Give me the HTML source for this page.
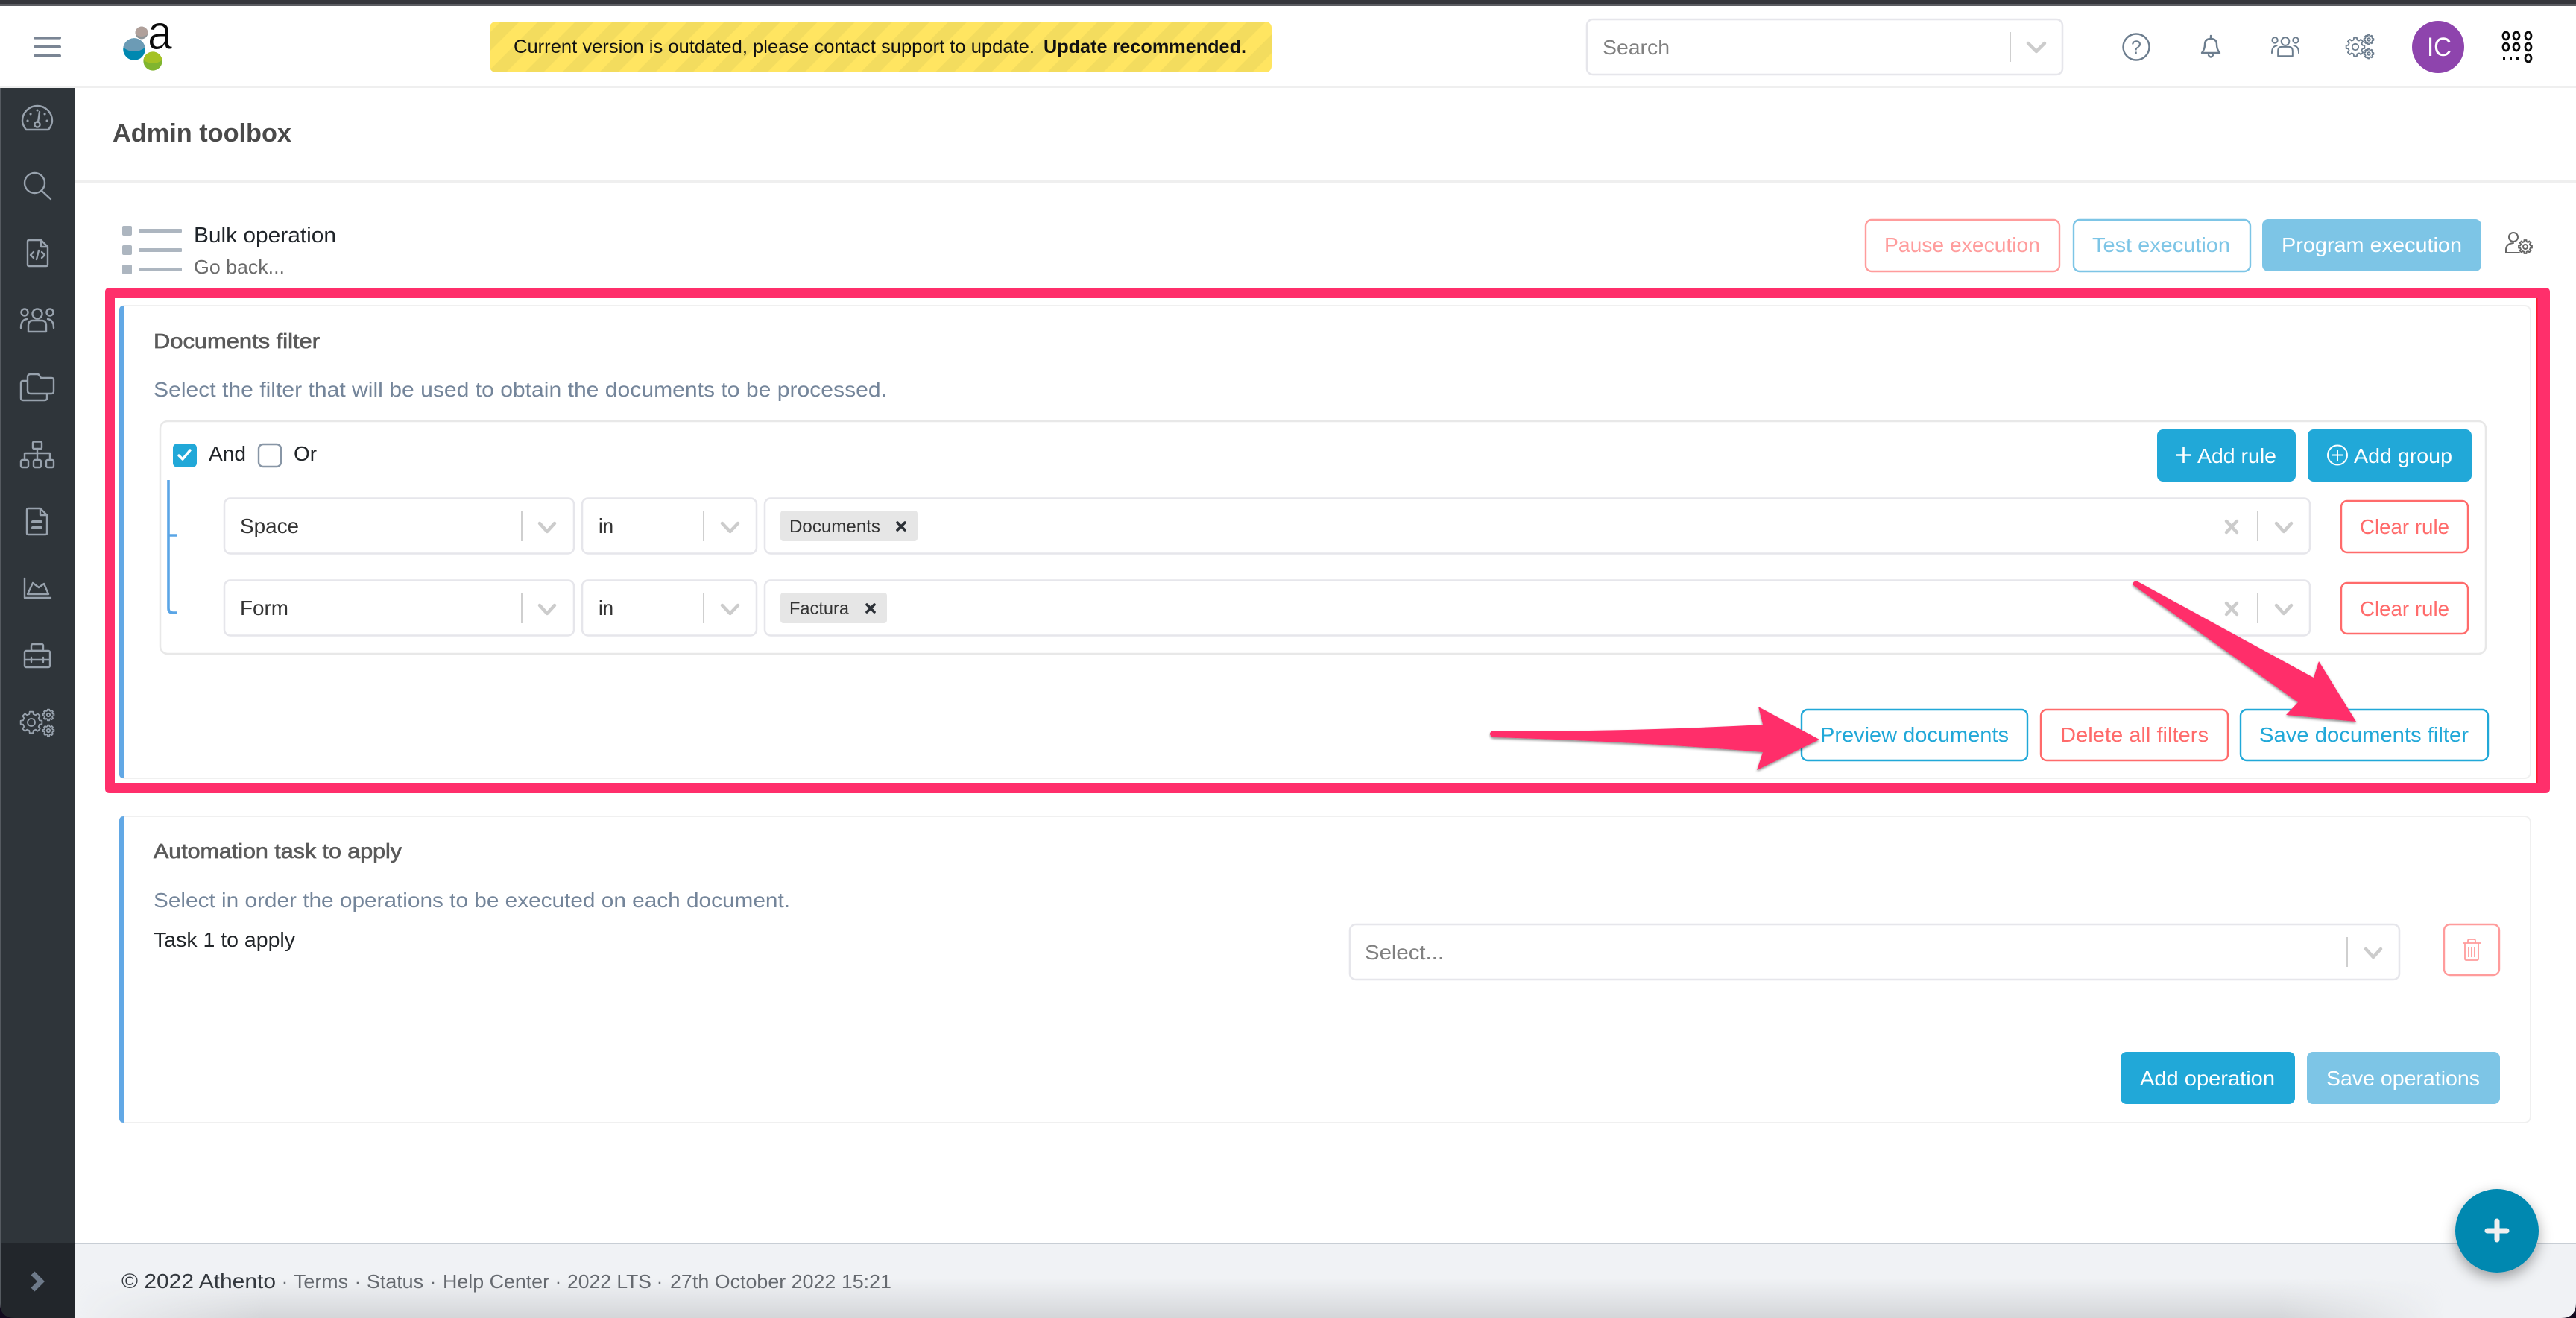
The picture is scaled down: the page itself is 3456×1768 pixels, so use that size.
<!DOCTYPE html>
<html lang="en">
<head>
<meta charset="utf-8">
<title>Admin toolbox</title>
<style>
html,body{margin:0;padding:0;background:#fff;width:3456px;height:1768px;overflow:hidden}
svg{display:block}
text{font-family:"Liberation Sans",Arial,sans-serif;white-space:pre}
.ic{fill:none;stroke:#98a2ad;stroke-width:2.4;stroke-linecap:round;stroke-linejoin:round}
.hi{fill:none;stroke:#6c7d8e;stroke-width:2.4;stroke-linecap:round;stroke-linejoin:round}
.sel{fill:#fff;stroke:#e6e6eb;stroke-width:2.5}
.sep{stroke:#cfcfcf;stroke-width:2}
.chev{fill:none;stroke:#cccccc;stroke-width:4.5;stroke-linecap:round;stroke-linejoin:round}
.med{stroke-width:.7}
</style>
</head>
<body>
<svg xmlns="http://www.w3.org/2000/svg" width="3456" height="1768" viewBox="0 0 3456 1768">
<defs>
<pattern id="st" width="35.4" height="35.4" patternUnits="userSpaceOnUse" patternTransform="rotate(45)">
<rect width="35.4" height="35.4" fill="#ffe561"/><rect width="17.7" height="35.4" fill="#f3dc5e"/>
</pattern>
<path id="gear" vector-effect="non-scaling-stroke" d="M75.7 -18.9 L98.8 -15.6 L98.8 15.6 L75.7 18.9 L66.9 40.2 L80.9 58.8 L58.8 80.9 L40.2 66.9 L18.9 75.7 L15.6 98.8 L-15.6 98.8 L-18.9 75.7 L-40.2 66.9 L-58.8 80.9 L-80.9 58.8 L-66.9 40.2 L-75.7 18.9 L-98.8 15.6 L-98.8 -15.6 L-75.7 -18.9 L-66.9 -40.2 L-80.9 -58.8 L-58.8 -80.9 L-40.2 -66.9 L-18.9 -75.7 L-15.6 -98.8 L15.6 -98.8 L18.9 -75.7 L40.2 -66.9 L58.8 -80.9 L80.9 -58.8 L66.9 -40.2 Z"/>
<clipPath id="cb"><circle cx="180" cy="66" r="14.8"/></clipPath>
<clipPath id="cg"><circle cx="205" cy="82" r="12.6"/></clipPath>
<clipPath id="cy"><circle cx="190" cy="44" r="8.4"/></clipPath>
<linearGradient id="fs" x1="0" y1="0" x2="0" y2="1"><stop offset="0" stop-color="#d6d8db" stop-opacity="0"/><stop offset="1" stop-color="#d3d5d8"/></linearGradient>
<linearGradient id="fm" x1="0" y1="0" x2="1" y2="0"><stop offset="0" stop-color="#fff" stop-opacity="0"/><stop offset=".08" stop-color="#fff"/><stop offset=".93" stop-color="#fff"/><stop offset="1" stop-color="#fff" stop-opacity="0"/></linearGradient>
<mask id="fmk"><rect x="100" y="1700" width="3180" height="68" fill="url(#fm)"/></mask>
<filter id="ash" x="-10%" y="-10%" width="120%" height="130%"><feDropShadow dx="0" dy="2" stdDeviation="1.5" flood-color="#000" flood-opacity=".45"/></filter>
<filter id="fab" x="-40%" y="-40%" width="180%" height="180%"><feDropShadow dx="0" dy="7" stdDeviation="9" flood-color="#000" flood-opacity=".35"/></filter>
</defs>

<rect width="3456" height="1768" fill="#fff"/>

<!-- window top bar -->
<rect width="3456" height="6" fill="#36373c"/>
<rect y="6" width="3456" height="2" fill="#5c5d62"/>

<!-- header -->
<rect y="116" width="3456" height="2" fill="#efefef"/>
<g fill="#7a8594">
<rect x="45" y="49" width="37" height="3.6" rx="1.8"/>
<rect x="45" y="61" width="37" height="3.6" rx="1.8"/>
<rect x="45" y="73" width="37" height="3.6" rx="1.8"/>
</g>
<!-- logo -->
<g>
<circle cx="190" cy="44" r="8.4" fill="#8e9497"/>
<ellipse cx="190" cy="37" rx="12" ry="12" fill="#b0a09a" clip-path="url(#cy)"/>
<circle cx="180" cy="66" r="14.8" fill="#0088b0"/>
<ellipse cx="180" cy="52" rx="20" ry="17" fill="#6c9bb5" clip-path="url(#cb)"/>
<circle cx="205" cy="82" r="12.6" fill="#80b52f"/>
<ellipse cx="205" cy="71" rx="17" ry="14" fill="#a5c224" clip-path="url(#cg)"/>
<text x="198" y="66" font-size="66" textLength="33" lengthAdjust="spacingAndGlyphs" fill="#0a0a0a" stroke="#fff" stroke-width="1">a</text>
</g>
<!-- version banner -->
<rect x="657" y="29" width="1049" height="68" rx="8" fill="url(#st)"/>
<text x="689" y="71" font-size="25" textLength="699" lengthAdjust="spacingAndGlyphs" fill="#111">Current version is outdated, please contact support to update.</text>
<text x="1400" y="71" font-size="25" font-weight="bold" textLength="272" lengthAdjust="spacingAndGlyphs" fill="#111">Update recommended.</text>
<!-- search -->
<rect class="sel" x="2129" y="26" width="638" height="74" rx="8"/>
<text x="2150" y="73" font-size="28" textLength="90" lengthAdjust="spacingAndGlyphs" fill="#808080">Search</text>
<line class="sep" x1="2697" y1="43" x2="2697" y2="83"/>
<path class="chev" d="M2721 58 L2732 69 L2743 58"/>
<!-- header icons -->
<circle class="hi" cx="2866" cy="63" r="17.5"/>
<text x="2866" y="72" font-size="25" text-anchor="middle" fill="#6c7d8e">?</text>
<path class="hi" stroke-width="2" d="M2966 48 V52 M2954 71 Q2958 66 2958 60 Q2958 52 2966 52 Q2974 52 2974 60 Q2974 66 2978 71 Z M2963 74 Q2966 79 2969 74"/>
<g class="hi" stroke-width="2.4" transform="translate(3066 62.5) scale(.82) translate(-50 -429.5)">
<circle cx="50" cy="421" r="6.5"/><circle cx="33" cy="419" r="4.5"/><circle cx="67" cy="419" r="4.5"/>
<path d="M38 445 V437 Q38 430 44 430 H56 Q62 430 62 437 V445 Z M28 440 Q28 429 36 428 M72 440 Q72 429 64 428"/>
</g>
<g class="hi" style="stroke-width:1.8">
<use href="#gear" transform="translate(3160 63) scale(.125)"/><circle cx="3160" cy="63" r="4.2"/>
<use href="#gear" transform="translate(3178 53) scale(.065)"/><circle cx="3178" cy="53" r="1.8"/>
<use href="#gear" transform="translate(3178 72) scale(.065)"/><circle cx="3178" cy="72" r="1.8"/>
</g>
<circle cx="3271" cy="63" r="35" fill="#8e44ad"/>
<text x="3256" y="75" font-size="35" textLength="33" lengthAdjust="spacingAndGlyphs" fill="#fff">IC</text>
<g fill="none" stroke="#0a0a0a" stroke-width="2.8">
<ellipse cx="3362" cy="48" rx="4" ry="5"/><ellipse cx="3376" cy="48" rx="4" ry="5"/><ellipse cx="3392" cy="48" rx="4" ry="5"/>
<ellipse cx="3362" cy="63" rx="4" ry="5"/><ellipse cx="3376" cy="63" rx="4" ry="5"/><ellipse cx="3392" cy="63" rx="4" ry="5"/>
<ellipse cx="3392" cy="78" rx="4" ry="5"/>
</g>
<g fill="#0a0a0a"><rect x="3358" y="77" width="3" height="4"/><rect x="3367" y="77" width="3" height="4"/><rect x="3376" y="77" width="3" height="4"/></g>

<!-- sidebar -->
<rect x="0" y="118" width="100" height="1650" fill="#2f353a"/>
<rect x="0" y="118" width="2" height="1650" fill="#555a60"/>
<rect x="2" y="1667" width="98" height="101" fill="#22262b"/>
<g class="ic">
<path d="M35 174 H65 C68 170 70 166 70 162 A20 20 0 0 0 30 162 C30 166 32 170 35 174Z M51 164 L53 150"/>
<circle cx="50" cy="167" r="3.6"/>
<path stroke-width="3" d="M37 162 h.1 M41 153 h.1 M50 148 h.1 M60 153 h.1 M63 162 h.1"/>
<circle cx="46.5" cy="245.5" r="13.5"/><path d="M56 256 L68 267"/>
<path d="M39 322 H55 L64 331 V355 Q64 357 62 357 H39 Q37 357 37 355 V324 Q37 322 39 322Z M55 322 V331 H64 M45 338 L41 342 L45 346 M56 338 L60 342 L56 346 M52 336 L49 348"/>
<circle cx="50" cy="421" r="6.5"/><circle cx="33" cy="419" r="4.5"/><circle cx="67" cy="419" r="4.5"/>
<path d="M38 445 V437 Q38 430 44 430 H56 Q62 430 62 437 V445 Z M28 440 Q28 429 36 428 M72 440 Q72 429 64 428"/>
<path d="M37 506 Q37 502 41 502 H50 Q52 502 53 504 L55 507 H69 Q72 507 72 510 V525 Q72 528 69 528 H41 Q37 528 37 524 Z M37 511 H31 Q28 511 28 514 V534 Q28 537 31 537 H60 Q63 537 63 534 V528"/>
<rect x="44" y="592.5" width="12" height="9.5" rx="1.5"/>
<path d="M50 602 V617 M33 617 V608 H67 V617"/>
<rect x="28" y="617" width="10" height="10" rx="2"/><rect x="45" y="617" width="10" height="10" rx="2"/><rect x="62" y="617" width="10" height="10" rx="2"/>
<path d="M38 682 H54 L63 691 V715 Q63 717 61 717 H38 Q36 717 36 715 V684 Q36 682 38 682Z M54 682 V691 H63"/>
<path stroke-width="4" d="M44 700 H55 M44 708 H55"/>
<path d="M33 776 V802 H68 M37 797 L44 782 L52 788 L59 783 L65 797 Z"/>
<rect x="42" y="864" width="16" height="9" rx="2"/><rect x="33" y="873" width="34" height="22" rx="2"/>
<path d="M33 885 H67 M42 882 V888 M58 882 V888"/>
<g style="stroke-width:1.8">
<use href="#gear" transform="translate(42 969) scale(.145)"/><circle cx="42" cy="969" r="5"/>
<use href="#gear" transform="translate(65 959) scale(.075)"/><circle cx="65" cy="959" r="2.2"/>
<use href="#gear" transform="translate(65 980) scale(.075)"/><circle cx="65" cy="980" r="2.2"/>
</g>
</g>
<path d="M44 1708 L55 1719 L44 1730" fill="none" stroke="#6e7a8a" stroke-width="7"/>

<!-- page title -->
<text x="151" y="190" font-size="34" font-weight="bold" textLength="240" lengthAdjust="spacingAndGlyphs" fill="#4a4a4a">Admin toolbox</text>
<rect x="100" y="242" width="3356" height="4" fill="#efefef"/>

<!-- bulk header -->
<g fill="#adb6c0">
<rect x="164" y="303" width="13" height="13" rx="2"/><rect x="186" y="307" width="58" height="5" rx="1"/>
<rect x="164" y="329" width="13" height="13" rx="2"/><rect x="186" y="333" width="58" height="5" rx="1"/>
<rect x="164" y="355" width="13" height="13" rx="2"/><rect x="186" y="359" width="58" height="5" rx="1"/>
</g>
<text x="260" y="325" font-size="29" textLength="191" lengthAdjust="spacingAndGlyphs" fill="#1f2429">Bulk operation</text>
<text x="260" y="367" font-size="26" textLength="122" lengthAdjust="spacingAndGlyphs" fill="#6b6b6b">Go back...</text>

<rect x="2503" y="295" width="260" height="69" rx="8" fill="#fff" stroke="#ff9c9c" stroke-width="2.4"/>
<text x="2528" y="338" font-size="28" textLength="209" lengthAdjust="spacingAndGlyphs" fill="#ff9c9c">Pause execution</text>
<rect x="2782" y="295" width="237" height="69" rx="8" fill="#fff" stroke="#7dc5e6" stroke-width="2.4"/>
<text x="2807" y="338" font-size="28" textLength="185" lengthAdjust="spacingAndGlyphs" fill="#7dc5e6">Test execution</text>
<rect x="3035" y="294" width="294" height="70" rx="8" fill="#7dc5e6"/>
<text x="3061" y="338" font-size="28" textLength="242" lengthAdjust="spacingAndGlyphs" fill="#fff">Program execution</text>
<g fill="none" stroke="#666" stroke-width="2" stroke-linecap="round">
<circle cx="3372" cy="318" r="6"/>
<path d="M3362 339 H3380 M3362 339 V335 Q3362 327 3372 326"/>
<use href="#gear" transform="translate(3388 331) scale(.09)"/><circle cx="3388" cy="331" r="3"/>
</g>

<!-- documents filter card -->
<rect x="160" y="410" width="3235" height="634" rx="8" fill="#fff" stroke="#f0f0f0" stroke-width="2"/>
<path d="M167 410 H166 Q160 410 160 416 V1038 Q160 1044 166 1044 H167 Z" fill="#62a8e5"/>
<text x="206" y="467" font-size="28" class="med" stroke="#5a5a5a" textLength="223" lengthAdjust="spacingAndGlyphs" fill="#5a5a5a">Documents filter</text>
<text x="206" y="532" font-size="28" textLength="984" lengthAdjust="spacingAndGlyphs" fill="#74859a">Select the filter that will be used to obtain the documents to be processed.</text>

<!-- query builder -->
<rect x="215" y="565" width="3120" height="312" rx="10" fill="#fff" stroke="#e8e8e8" stroke-width="2.5"/>
<rect x="232" y="595" width="32" height="32" rx="6" fill="#21a8d8"/>
<path d="M240 611 L245 616 L255 604" fill="none" stroke="#fff" stroke-width="3.4" stroke-linecap="round" stroke-linejoin="round"/>
<text x="280" y="618" font-size="28" textLength="50" lengthAdjust="spacingAndGlyphs" fill="#212529">And</text>
<rect x="347" y="596" width="30" height="30" rx="6" fill="#fff" stroke="#8896a6" stroke-width="2.4"/>
<text x="394" y="618" font-size="28" textLength="31" lengthAdjust="spacingAndGlyphs" fill="#212529">Or</text>
<path d="M226 644 V816 Q226 822 232 822 H238 M226 718 H238" fill="none" stroke="#5aa5e6" stroke-width="3.6"/>

<rect x="2894" y="576" width="186" height="70" rx="8" fill="#21a8d8"/>
<path d="M2929.5 600 V621 M2919 610.5 H2940" stroke="#fff" stroke-width="2.6" fill="none"/>
<text x="2948" y="621" font-size="28" textLength="106" lengthAdjust="spacingAndGlyphs" fill="#fff">Add rule</text>
<rect x="3096" y="576" width="220" height="70" rx="8" fill="#21a8d8"/>
<circle cx="3136" cy="610.5" r="13" fill="none" stroke="#fff" stroke-width="2"/>
<path d="M3136 603 V618 M3128.5 610.5 H3143.5" stroke="#fff" stroke-width="2" fill="none"/>
<text x="3158" y="621" font-size="28" textLength="132" lengthAdjust="spacingAndGlyphs" fill="#fff">Add group</text>

<!-- row 1 -->
<rect class="sel" x="301" y="668.5" width="469" height="74" rx="8"/>
<text x="322" y="715" font-size="28" textLength="79" lengthAdjust="spacingAndGlyphs" fill="#333">Space</text>
<line class="sep" x1="700" y1="686" x2="700" y2="726"/>
<path class="chev" d="M724 702 L734 713 L744 702"/>
<rect class="sel" x="781" y="668.5" width="234" height="74" rx="8"/>
<text x="803" y="715" font-size="28" textLength="20" lengthAdjust="spacingAndGlyphs" fill="#333">in</text>
<line class="sep" x1="944" y1="686" x2="944" y2="726"/>
<path class="chev" d="M969 702 L979.5 713 L990 702"/>
<rect class="sel" x="1026" y="668.5" width="2073" height="74" rx="8"/>
<rect x="1047" y="685" width="184" height="41" rx="4" fill="#e6e6e6"/>
<text x="1059" y="714" font-size="24" textLength="122" lengthAdjust="spacingAndGlyphs" fill="#333">Documents</text>
<path d="M1204 701 L1214 711 M1214 701 L1204 711" stroke="#2b3036" stroke-width="3.6" stroke-linecap="round"/>
<path d="M2987 699 L3001 714 M3001 699 L2987 714" stroke="#ccc" stroke-width="4.5" stroke-linecap="round"/>
<line class="sep" x1="3029" y1="686" x2="3029" y2="726"/>
<path class="chev" d="M3054 702 L3064 713 L3074 702"/>
<rect x="3141" y="672" width="170" height="69" rx="8" fill="#fff" stroke="#ff6b6b" stroke-width="2.4"/>
<text x="3166" y="716" font-size="28" textLength="120" lengthAdjust="spacingAndGlyphs" fill="#ff6b6b">Clear rule</text>

<!-- row 2 -->
<rect class="sel" x="301" y="778.5" width="469" height="74" rx="8"/>
<text x="322" y="825" font-size="28" textLength="65" lengthAdjust="spacingAndGlyphs" fill="#333">Form</text>
<line class="sep" x1="700" y1="796" x2="700" y2="836"/>
<path class="chev" d="M724 812 L734 823 L744 812"/>
<rect class="sel" x="781" y="778.5" width="234" height="74" rx="8"/>
<text x="803" y="825" font-size="28" textLength="20" lengthAdjust="spacingAndGlyphs" fill="#333">in</text>
<line class="sep" x1="944" y1="796" x2="944" y2="836"/>
<path class="chev" d="M969 812 L979.5 823 L990 812"/>
<rect class="sel" x="1026" y="778.5" width="2073" height="74" rx="8"/>
<rect x="1047" y="795" width="143" height="41" rx="4" fill="#e6e6e6"/>
<text x="1059" y="824" font-size="24" textLength="80" lengthAdjust="spacingAndGlyphs" fill="#333">Factura</text>
<path d="M1163 811 L1173 821 M1173 811 L1163 821" stroke="#2b3036" stroke-width="3.6" stroke-linecap="round"/>
<path d="M2987 809 L3001 824 M3001 809 L2987 824" stroke="#ccc" stroke-width="4.5" stroke-linecap="round"/>
<line class="sep" x1="3029" y1="796" x2="3029" y2="836"/>
<path class="chev" d="M3054 812 L3064 823 L3074 812"/>
<rect x="3141" y="782" width="170" height="68" rx="8" fill="#fff" stroke="#ff6b6b" stroke-width="2.4"/>
<text x="3166" y="826" font-size="28" textLength="120" lengthAdjust="spacingAndGlyphs" fill="#ff6b6b">Clear rule</text>

<!-- filter actions -->
<rect x="2417" y="952" width="303" height="68" rx="8" fill="#fff" stroke="#21a8d8" stroke-width="2.4"/>
<text x="2442" y="995" font-size="28" textLength="253" lengthAdjust="spacingAndGlyphs" fill="#21a8d8">Preview documents</text>
<rect x="2738" y="952" width="251" height="68" rx="8" fill="#fff" stroke="#ff6b6b" stroke-width="2.4"/>
<text x="2764" y="995" font-size="28" textLength="199" lengthAdjust="spacingAndGlyphs" fill="#ff6b6b">Delete all filters</text>
<rect x="3006" y="952" width="332" height="68" rx="8" fill="#fff" stroke="#21a8d8" stroke-width="2.4"/>
<text x="3031" y="995" font-size="28" textLength="281" lengthAdjust="spacingAndGlyphs" fill="#21a8d8">Save documents filter</text>

<!-- automation card -->
<rect x="160" y="1095" width="3235" height="411" rx="8" fill="#fff" stroke="#f0f0f0" stroke-width="2"/>
<path d="M167 1095 H166 Q160 1095 160 1101 V1500 Q160 1506 166 1506 H167 Z" fill="#62a8e5"/>
<text x="206" y="1151" font-size="28" class="med" stroke="#5a5a5a" textLength="333" lengthAdjust="spacingAndGlyphs" fill="#5a5a5a">Automation task to apply</text>
<text x="206" y="1217" font-size="28" textLength="854" lengthAdjust="spacingAndGlyphs" fill="#74859a">Select in order the operations to be executed on each document.</text>
<text x="206" y="1270" font-size="28" textLength="190" lengthAdjust="spacingAndGlyphs" fill="#212529">Task 1 to apply</text>
<rect class="sel" x="1811" y="1240" width="1408" height="74" rx="8"/>
<text x="1831" y="1287" font-size="28" textLength="106" lengthAdjust="spacingAndGlyphs" fill="#808080">Select...</text>
<line class="sep" x1="3149" y1="1257" x2="3149" y2="1297"/>
<path class="chev" d="M3174 1273 L3184 1284 L3194 1273"/>
<rect x="3279" y="1240" width="74" height="68" rx="8" fill="#fff" stroke="#ff9c9c" stroke-width="2.4"/>
<path d="M3304 1265 H3328 M3311 1265 V1262 Q3311 1260 3313 1260 H3319 Q3321 1260 3321 1262 V1265 M3307 1265 V1286 Q3307 1288 3309 1288 H3323 Q3325 1288 3325 1286 V1265 M3312 1270 V1284 M3316 1270 V1284 M3320 1270 V1284" fill="none" stroke="#ff9c9c" stroke-width="1.8"/>
<rect x="2845" y="1411" width="234" height="70" rx="8" fill="#21a8d8"/>
<text x="2871" y="1456" font-size="28" textLength="181" lengthAdjust="spacingAndGlyphs" fill="#fff">Add operation</text>
<rect x="3095" y="1411" width="259" height="70" rx="8" fill="#7dc5e6"/>
<text x="3121" y="1456" font-size="28" textLength="206" lengthAdjust="spacingAndGlyphs" fill="#fff">Save operations</text>

<!-- footer -->
<rect x="100" y="1667" width="3356" height="101" fill="#f0f2f5"/>
<rect x="100" y="1667" width="3356" height="2" fill="#c8ced5"/>
<rect x="100" y="1715" width="3180" height="53" fill="url(#fs)" mask="url(#fmk)"/>
<text x="163" y="1728" font-size="28" textLength="207" lengthAdjust="spacingAndGlyphs" fill="#33383e">© 2022 Athento</text>
<g font-size="26" fill="#666a70">
<text x="382" y="1728" text-anchor="middle">·</text>
<text x="394" y="1728" textLength="73" lengthAdjust="spacingAndGlyphs">Terms</text>
<text x="480" y="1728" text-anchor="middle">·</text>
<text x="492" y="1728" textLength="76" lengthAdjust="spacingAndGlyphs">Status</text>
<text x="581" y="1728" text-anchor="middle">·</text>
<text x="594" y="1728" textLength="143" lengthAdjust="spacingAndGlyphs">Help Center</text>
<text x="749" y="1728" text-anchor="middle">·</text>
<text x="761" y="1728" textLength="113" lengthAdjust="spacingAndGlyphs">2022 LTS</text>
<text x="885" y="1728" text-anchor="middle">·</text>
<text x="899" y="1728" textLength="297" lengthAdjust="spacingAndGlyphs">27th October 2022 15:21</text>
</g>

<!-- FAB -->
<circle cx="3350" cy="1651" r="56" fill="#0088b0" filter="url(#fab)"/>
<path d="M3350 1638 V1663 M3337 1651 H3363" stroke="#f0f0f0" stroke-width="7" stroke-linecap="round"/>

<!-- window corners -->
<path d="M0 1748 V1768 H20 Q0 1768 0 1748Z" fill="#120a1e"/>
<path d="M3456 1748 V1768 H3436 Q3456 1768 3456 1748Z" fill="#120a1e"/>

<!-- annotation -->
<path fill-rule="evenodd" fill="#ff2f6b" d="M147 386 H3415 Q3421 386 3421 392 V1058 Q3421 1064 3415 1064 H147 Q141 1064 141 1058 V392 Q141 386 147 386 Z M154 400 V1050 H3404 V400 Z"/>
<rect x="3403" y="400" width="1.5" height="650" fill="#ff1a2e"/>
<g filter="url(#ash)" fill="#ff2f6b">
<path d="M2001 981 Q2200 981 2365 972 L2359 948 L2441 992 L2357 1033 L2365 1009 Q2200 995 2003 989 Q1996 985 2001 981 Z"/>
<path d="M2866 779 L3104 909 L3111 887 L3161 968 L3067 959 L3083 942 L2862 785 Q2860 781 2866 779 Z"/>
</g>
</svg>
</body>
</html>
